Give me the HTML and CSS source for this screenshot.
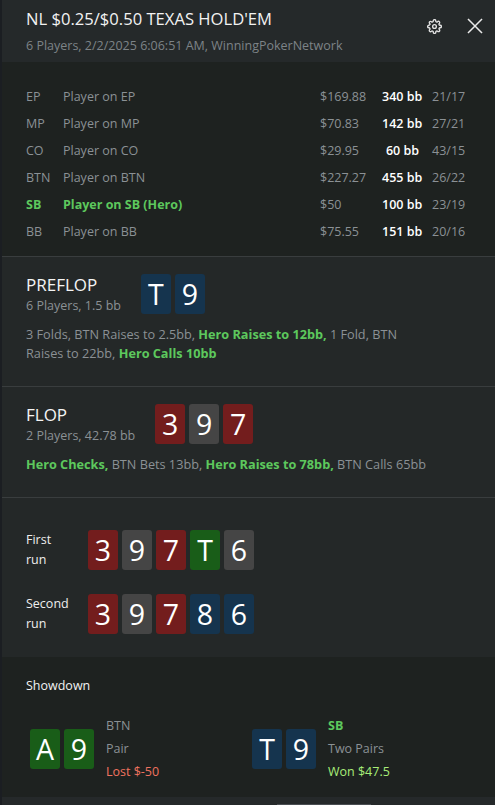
FILE: index.html
```html
<!DOCTYPE html>
<html>
<head>
<meta charset="utf-8">
<link rel="stylesheet" href="styles.css">
</head>
<body>
<div class="panel">
  <header class="header">
    <div class="head-text">
      <div class="title">NL $0.25/$0.50 TEXAS HOLD'EM</div>
      <div class="subtitle">6 Players, 2/2/2025 6:06:51 AM, WinningPokerNetwork</div>
    </div>
    <div class="head-icons">
      <svg class="icon gear" viewBox="0 0 24 24" width="15" height="15" fill="none" stroke="#e2e2e2" stroke-width="2.2" stroke-linecap="round" stroke-linejoin="round"><circle cx="12" cy="12" r="3"/><path d="M19.4 15a1.65 1.65 0 0 0 .33 1.820l.06.06a2 2 0 0 1 0 2.83 2 2 0 0 1-2.83 0l-.06-.06a1.65 1.65 0 0 0-1.82-.33 1.65 1.65 0 0 0-1 1.510V21a2 2 0 0 1-2 2 2 2 0 0 1-2-2v-.09A1.65 1.65 0 0 0 9 19.4a1.65 1.65 0 0 0-1.82.33l-.06.06a2 2 0 0 1-2.830 0 2 2 0 0 1 0-2.830l.06-.06a1.65 1.65 0 0 0 .33-1.82 1.65 1.65 0 0 0-1.51-1H3a2 2 0 0 1-2-2 2 2 0 0 1 2-2h.09A1.65 1.65 0 0 0 4.6 9a1.65 1.65 0 0 0-.33-1.82l-.06-.06a2 2 0 0 1 0-2.83 2 2 0 0 1 2.83 0l.06.06a1.65 1.65 0 0 0 1.82.33H9a1.65 1.65 0 0 0 1-1.51V3a2 2 0 0 1 2-2 2 2 0 0 1 2 2v.09a1.65 1.65 0 0 0 1 1.51 1.65 1.65 0 0 0 1.82-.33l.06-.06a2 2 0 0 1 2.83 0 2 2 0 0 1 0 2.83l-.06.06a1.65 1.65 0 0 0-.33 1.82V9a1.650 1.650 0 0 0 1.51 1H21a2 2 0 0 1 2 2 2 2 0 0 1-2 2h-.09a1.65 1.65 0 0 0-1.51 1z"/></svg>
      <svg class="icon close" viewBox="0 0 16 16" width="16" height="16" fill="none" stroke="#eaeaea" stroke-width="1.5" stroke-linecap="square"><path d="M1.5 1.5 L14.5 14.5 M14.5 1.5 L1.5 14.5"/></svg>
    </div>
  </header>

  <section class="players">
    <div class="prow"><span>EP</span><span>Player on EP</span><span>$169.88</span><span class="bb">340 bb</span><span class="ratio">21/17</span></div>
    <div class="prow"><span>MP</span><span>Player on MP</span><span>$70.83</span><span class="bb">142 bb</span><span class="ratio">27/21</span></div>
    <div class="prow"><span>CO</span><span>Player on CO</span><span>$29.95</span><span class="bb">60 bb</span><span class="ratio">43/15</span></div>
    <div class="prow"><span>BTN</span><span>Player on BTN</span><span>$227.27</span><span class="bb">455 bb</span><span class="ratio">26/22</span></div>
    <div class="prow hero"><span>SB</span><span>Player on SB (Hero)</span><span>$50</span><span class="bb">100 bb</span><span class="ratio">23/19</span></div>
    <div class="prow"><span>BB</span><span>Player on BB</span><span>$75.55</span><span class="bb">151 bb</span><span class="ratio">20/16</span></div>
  </section>

  <section class="street">
    <div class="street-head">
      <div class="street-info">
        <div class="street-name">PREFLOP</div>
        <div class="street-sub">6 Players, 1.5 bb</div>
      </div>
      <div class="cards">
        <span class="card blue">T</span><span class="card blue">9</span>
      </div>
    </div>
    <p class="actions">3 Folds, BTN Raises to 2.5bb, <b class="hl">Hero Raises to 12bb,</b> 1 Fold, BTN Raises to 22bb, <b class="hl">Hero Calls 10bb</b></p>
  </section>

  <section class="street">
    <div class="street-head">
      <div class="street-info">
        <div class="street-name">FLOP</div>
        <div class="street-sub">2 Players, 42.78 bb</div>
      </div>
      <div class="cards">
        <span class="card red">3</span><span class="card gray">9</span><span class="card red">7</span>
      </div>
    </div>
    <p class="actions"><b class="hl">Hero Checks,</b> BTN Bets 13bb, <b class="hl">Hero Raises to 78bb,</b> BTN Calls 65bb</p>
  </section>

  <section class="runs">
    <div class="run">
      <div class="run-label">First<br>run</div>
      <div class="cards">
        <span class="card red">3</span><span class="card gray">9</span><span class="card red">7</span><span class="card green">T</span><span class="card gray">6</span>
      </div>
    </div>
    <div class="run">
      <div class="run-label">Second<br>run</div>
      <div class="cards">
        <span class="card red">3</span><span class="card gray">9</span><span class="card red">7</span><span class="card blue">8</span><span class="card blue">6</span>
      </div>
    </div>
  </section>

  <section class="showdown">
    <div class="sd-title">Showdown</div>
    <div class="hands">
      <div class="hand">
        <div class="cards">
          <span class="card green">A</span><span class="card green">9</span>
        </div>
        <div class="hand-info">
          <div>BTN</div>
          <div>Pair</div>
          <div class="lost">Lost $-50</div>
        </div>
      </div>
      <div class="hand">
        <div class="cards">
          <span class="card blue">T</span><span class="card blue">9</span>
        </div>
        <div class="hand-info">
          <div class="hero-pos">SB</div>
          <div>Two Pairs</div>
          <div class="won">Won $47.5</div>
        </div>
      </div>
    </div>
  </section>
  <div class="footer"><span class="thumb"></span></div>
</div>
</body>
</html>
```

FILE: styles.css
```css
* { box-sizing: border-box; }
html, body { margin: 0; padding: 0; }
body {
  background: #1b1e22;
  font-family: "Open Sans", "Noto Sans", sans-serif;
  font-size: 12.5px;
  color: #8b9195;
  width: 495px;
  height: 805px;
  overflow: hidden;
}
.panel {
  margin-left: 2px;
  width: 493px;
  background: #242828;
}
.header {
  background: #25292a;
  height: 62px;
  padding: 8px 12px 0 24px;
  display: flex;
  justify-content: space-between;
  align-items: flex-start;
}
.title {
  font-size: 16.6px;
  line-height: 22px;
  color: #f2f2f2;
}
.subtitle {
  margin-top: 7px;
  font-size: 12.5px;
  line-height: 17px;
  color: #7d8387;
}
.head-icons {
  display: flex;
  align-items: center;
  gap: 25px;
  padding-top: 10px;
}
.icon { display: block; }

.players {
  background: #1e2220;
  padding: 21px 24px 11px;
  border-bottom: 1px solid #393d3e;
}
.prow {
  display: grid;
  grid-template-columns: 37px 257px 62px 37px 1fr;
  height: 27px;
  align-items: center;
  font-size: 12.5px;
  color: #8b9195;
}
.prow .bb {
  text-align: right;
  color: #ffffff;
  font-weight: 600;
  white-space: nowrap;
}
.prow .ratio { padding-left: 13px; }
.prow.hero span:nth-child(1),
.prow.hero span:nth-child(2) {
  color: #5dc85d;
  font-weight: 700;
}

.street {
  padding: 16px 24px 23px;
  border-bottom: 1px solid #393d3e;
}
.street-head {
  display: flex;
  align-items: center;
  gap: 20px;
}
.street-name {
  font-size: 17px;
  line-height: 24px;
  color: #f4f4f4;
}
.street-sub {
  font-size: 12.5px;
  line-height: 17px;
  color: #8b9195;
}
.cards {
  display: flex;
  gap: 4px;
}
.card {
  width: 30px;
  height: 40px;
  border-radius: 3px;
  color: #ffffff;
  font-size: 28.5px;
  line-height: 40px;
  text-align: center;
}
.card.blue { background: #15344e; }
.card.red { background: #731d1d; }
.card.gray { background: #454545; }
.card.green { background: #195d18; }

.actions {
  margin: 11px 0 0;
  font-size: 12.7px;
  line-height: 19px;
  color: #8b9195;
  max-width: 400px;
}
.hl {
  color: #5dc85d;
  font-weight: 700;
}

.runs {
  padding: 32px 24px 23px;
  display: flex;
  flex-direction: column;
  gap: 24px;
}
.run {
  display: flex;
  align-items: center;
}
.run-label {
  width: 62px;
  font-size: 12.5px;
  line-height: 20px;
  color: #eeeeee;
}

.showdown {
  background: #1e2220;
  padding: 20px 24px 14px;
}
.sd-title {
  font-size: 12.5px;
  line-height: 17px;
  color: #f2f2f2;
}
.hands {
  margin-top: 20px;
  display: grid;
  grid-template-columns: 222px 1fr;
  padding-left: 4px;
}
.hand {
  display: flex;
  align-items: center;
  gap: 12px;
}
.hand-info {
  font-size: 12.5px;
  line-height: 23px;
  color: #8b9195;
}
.hero-pos { color: #5dc85d; font-weight: 700; }
.lost { color: #f0725f; }
.won { color: #a8ee78; }

.footer {
  height: 8px;
  background: #25292a;
  position: relative;
}
.thumb {
  position: absolute;
  left: 275px;
  bottom: 0;
  width: 94px;
  height: 1px;
  background: #4a4e52;
}
```
